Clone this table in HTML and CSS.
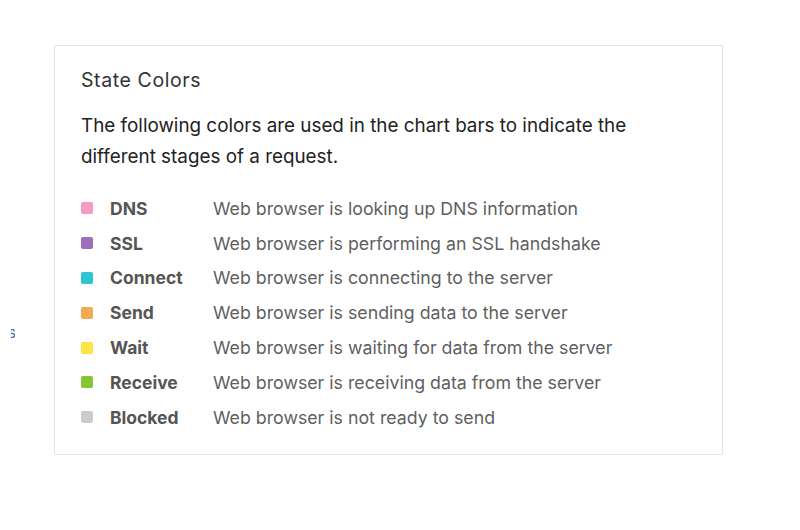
FILE: index.html
```html
<!DOCTYPE html>
<html>
<head>
<meta charset="utf-8">
<link rel="stylesheet" href="styles.css">
</head>
<body>
<div class="page">
  <div class="side"><span class="side-link">s</span></div>
  <section class="card">
    <h2 class="title">State Colors</h2>
    <p class="intro">The following colors are used in the chart bars to indicate the different stages of a request.</p>
    <ul class="legend">
      <li class="row"><span class="swatch dns"></span><span class="label">DNS</span><span class="desc">Web browser is looking up DNS information</span></li>
      <li class="row"><span class="swatch ssl"></span><span class="label">SSL</span><span class="desc">Web browser is performing an SSL handshake</span></li>
      <li class="row"><span class="swatch connect"></span><span class="label">Connect</span><span class="desc">Web browser is connecting to the server</span></li>
      <li class="row"><span class="swatch send"></span><span class="label">Send</span><span class="desc">Web browser is sending data to the server</span></li>
      <li class="row"><span class="swatch wait"></span><span class="label">Wait</span><span class="desc">Web browser is waiting for data from the server</span></li>
      <li class="row"><span class="swatch receive"></span><span class="label">Receive</span><span class="desc">Web browser is receiving data from the server</span></li>
      <li class="row"><span class="swatch blocked"></span><span class="label">Blocked</span><span class="desc">Web browser is not ready to send</span></li>
    </ul>
  </section>
</div>
</body>
</html>
```
FILE: styles.css
```css
html, body {
  margin: 0;
  padding: 0;
  background: #ffffff;
  font-family: Inter, "Noto Sans", sans-serif;
}

.page {
  display: flex;
  align-items: flex-start;
  padding-top: 45px;
}

.side {
  width: 54px;
  height: 300px;
  overflow: hidden;
}

.side-link {
  display: block;
  width: 4px;
  overflow: hidden;
  margin-top: 278px;
  margin-left: 11px;
  font-size: 15px;
  color: #4a6fa5;
  text-indent: -3px;
  white-space: nowrap;
}

.card {
  width: 669px;
  box-sizing: border-box;
  border: 1px solid #e2e2e2;
  border-radius: 2px;
  padding: 20px 26px 19px 26px;
}

.title {
  margin: 0;
  font-size: 19.5px;
  letter-spacing: 0.6px;
  font-weight: 400;
  color: #333333;
  line-height: 28px;
}

.intro {
  margin: 16px 0 0 0;
  font-size: 18.85px;
  line-height: 31px;
  color: #222222;
  max-width: 570px;
}

.legend {
  list-style: none;
  margin: 19px 0 0 0;
  padding: 0;
}

.row {
  display: flex;
  align-items: center;
  height: 34.8px;
  font-size: 17.5px;
}

.swatch {
  width: 12px;
  height: 12px;
  border-radius: 2px;
  margin-right: 17px;
  flex: none;
}

.label {
  width: 103px;
  font-weight: 700;
  color: #555555;
}

.desc {
  color: #5f5f5f;
  font-size: 17.75px;
}

.dns { background: #f59ac3; }
.ssl { background: #9b6fba; }
.connect { background: #2fc4d4; }
.send { background: #f2ab55; }
.wait { background: #fce447; }
.receive { background: #84c731; }
.blocked { background: #cccccc; }
```
